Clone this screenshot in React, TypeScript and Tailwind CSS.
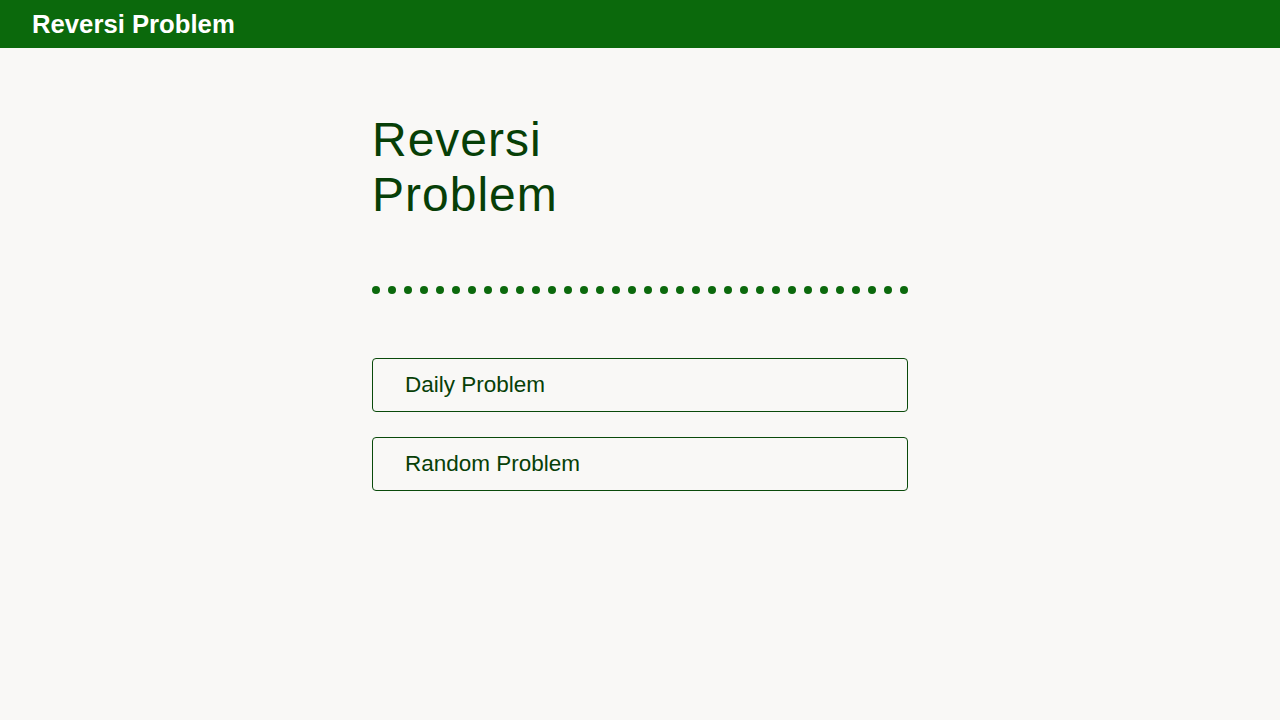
import React from 'react';

const dots = Array.from({ length: 34 }, (_, i) => i);

export default function App() {
    return (
        <div className="min-h-screen bg-[#f9f8f6] font-['Liberation_Sans',Arial,sans-serif]">
            <header className="h-12 bg-[#0b690c] flex items-center px-8">
                <h1 className="text-[25.7px] font-bold text-white leading-none mt-[2px]">Reversi Problem</h1>
            </header>
            <main className="w-[536px] mx-auto pt-16">
                <h2 className="text-[48px] leading-[55px] tracking-[1px] text-[#073f07]">
                    Reversi
                    <br />
                    Problem
                </h2>
                <div className="flex gap-2 mt-16">
                    {dots.map((d) => (
                        <span key={d} className="w-2 h-2 rounded-full bg-[#0b690c]" />
                    ))}
                </div>
                <div className="flex flex-col gap-[25px] mt-16">
                    <button
                        type="button"
                        className="h-[54px] border border-[#0a4a0a] rounded-[4px] text-left pl-8 text-[22.5px] text-[#073f07]"
                    >
                        Daily Problem
                    </button>
                    <button
                        type="button"
                        className="h-[54px] border border-[#0a4a0a] rounded-[4px] text-left pl-8 text-[22.5px] text-[#073f07]"
                    >
                        Random Problem
                    </button>
                </div>
            </main>
        </div>
    );
}
